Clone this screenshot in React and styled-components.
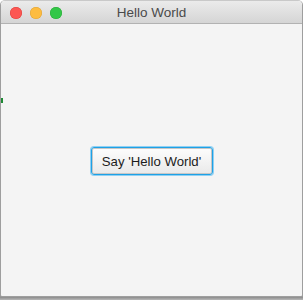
import React from "react";
import styled, { createGlobalStyle } from "styled-components";

const GlobalStyle = createGlobalStyle`
  html, body {
    margin: 0;
    padding: 0;
    background: #ffffff;
  }
  body {
    font-family: "Liberation Sans", Arial, sans-serif;
  }
`;

const Window = styled.div`
  width: 303px;
  height: 300px;
  box-sizing: border-box;
  display: flex;
  flex-direction: column;
  padding-bottom: 3px;
  background: linear-gradient(to bottom, #ffffff 0%, #ffffff 97%, #8a8a8a 99%, #b8b8b8 100%);
`;

const Frame = styled.div`
  flex: 1;
  display: flex;
  flex-direction: column;
  border: 1px solid #9e9e9e;
  border-top-color: #c9c9c9;
  border-radius: 5px 5px 2px 2px;
  overflow: hidden;
  position: relative;
`;

const TitleBar = styled.div`
  height: 21px;
  flex: none;
  display: flex;
  align-items: center;
  position: relative;
  padding: 1px 0 0 9px;
  gap: 8px;
  background: linear-gradient(to bottom, #ebebeb 0%, #d5d5d5 100%);
  border-bottom: 1px solid #b2b2b2;
`;

const Light = styled.span`
  width: 12px;
  height: 12px;
  border-radius: 50%;
  background: ${(p) => p.$color};
  box-shadow: inset 0 0 0 0.5px ${(p) => p.$edge};
`;

const Title = styled.div`
  position: absolute;
  left: 0;
  right: 0;
  top: 0;
  height: 22px;
  line-height: 23px;
  text-align: center;
  font-size: 13.5px;
  color: #4a4a4a;
  pointer-events: none;
`;

const Content = styled.div`
  flex: 1;
  display: flex;
  align-items: center;
  justify-content: center;
  background: #f4f4f4;
  position: relative;
`;

const Button = styled.button`
  height: 28px;
  width: 122px;
  padding: 0;
  font-family: "Liberation Sans", Arial, sans-serif;
  font-size: 13.2px;
  color: #1c1c1c;
  border-radius: 3px;
  border: 1px solid #1ea1e6;
  background: linear-gradient(to bottom, #fdfdfd 0%, #e9e9e9 100%);
  box-shadow: 0 0 0 1px #8fd0f3, inset 0 0 0 1px #c6c6c6;
  margin-top: 2px;
`;

const Speck = styled.span`
  position: absolute;
  left: 0;
  top: 74px;
  width: 2px;
  height: 5px;
  background: #1f8a35;
`;

export default function App() {
  return (
    <>
      <GlobalStyle />
      <Window>
        <Frame>
          <TitleBar>
            <Light $color="#fc5753" $edge="#de3f3b" />
            <Light $color="#fdbc40" $edge="#dea236" />
            <Light $color="#33c748" $edge="#27aa35" />
            <Title>Hello World</Title>
          </TitleBar>
          <Content>
            <Speck />
            <Button>Say 'Hello World'</Button>
          </Content>
        </Frame>
      </Window>
    </>
  );
}
